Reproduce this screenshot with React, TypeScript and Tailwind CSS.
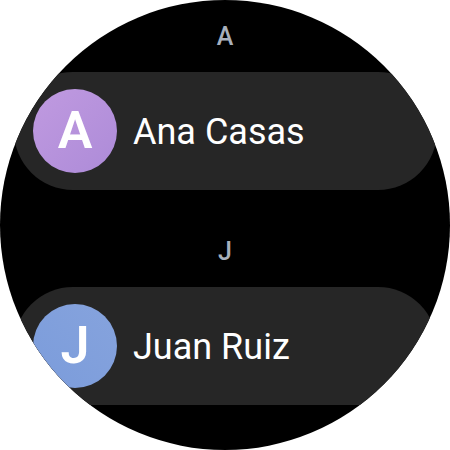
import React from 'react'

interface Contact {
  name: string
  initial: string
  color: string
}

const sections: { letter: string; contacts: Contact[] }[] = [
  { letter: 'A', contacts: [{ name: 'Ana Casas', initial: 'A', color: 'bg-gradient-to-br from-[#c09ae0] to-[#ad8bd8]' }] },
  { letter: 'J', contacts: [{ name: 'Juan Ruiz', initial: 'J', color: 'bg-gradient-to-bl from-[#86a3dd] to-[#7b9cdb]' }] },
]

export default function App() {
  return (
    <div className="w-[450px] h-[450px] bg-white" style={{ fontFamily: 'Roboto, "Noto Sans", sans-serif' }}>
      <div className="w-[450px] h-[450px] rounded-full bg-black overflow-hidden pt-[17px]">
        {sections.map((section, i) => (
          <div key={section.letter} className={i > 0 ? 'mt-[42px]' : ''}>
            {/* Section header */}
            <div className="h-[40px] flex items-center justify-center text-[25px] font-medium text-[#a8b0bc]">
              {section.letter}
            </div>
            {section.contacts.map(c => (
              <div
                key={c.name}
                className="mt-[15px] ml-[14px] w-[423px] h-[118px] rounded-full bg-[#262626] flex items-center pl-[19px] gap-[16px]"
              >
                <div className={`w-[84px] h-[84px] rounded-full ${c.color} flex items-center justify-center flex-none`}>
                  <span className="text-white text-[52px] font-semibold leading-none">{c.initial}</span>
                </div>
                <span className="text-white text-[36px] leading-none pt-[2px]">{c.name}</span>
              </div>
            ))}
          </div>
        ))}
      </div>
    </div>
  )
}
